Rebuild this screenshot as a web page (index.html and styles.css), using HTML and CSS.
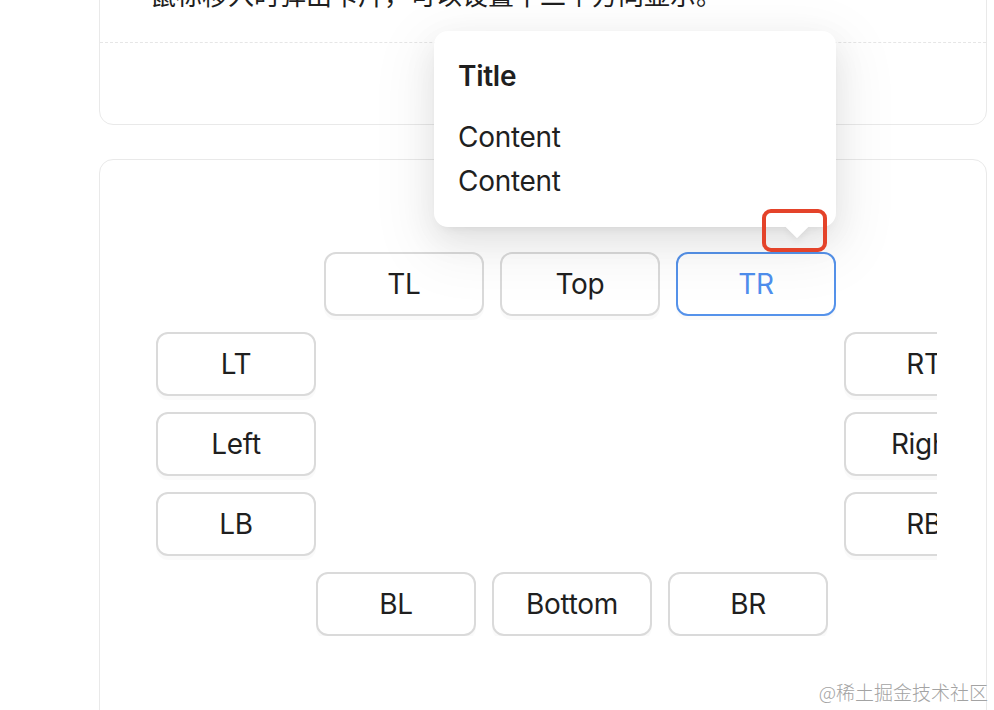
FILE: index.html
```html
<!DOCTYPE html>
<html lang="zh-CN">
<head>
<meta charset="utf-8">
<title>Popover placement</title>
<link rel="stylesheet" href="styles.css">
</head>
<body>
<div class="page">
  <section class="card card-intro">
    <p class="desc">鼠标移入时弹出卡片，可以设置十二个方向显示。</p>
    <div class="card-foot"></div>
  </section>

  <section class="card card-demo">
    <div class="demo">
      <div class="row row-top">
        <button class="btn">TL</button>
        <button class="btn">Top</button>
        <button class="btn btn-active">TR</button>
      </div>
      <div class="sides">
        <div class="col">
          <button class="btn">LT</button>
          <button class="btn">Left</button>
          <button class="btn">LB</button>
        </div>
        <div class="col col-right">
          <button class="btn">RT</button>
          <button class="btn">Right</button>
          <button class="btn">RB</button>
        </div>
      </div>
      <div class="row row-bottom">
        <button class="btn">BL</button>
        <button class="btn">Bottom</button>
        <button class="btn">BR</button>
      </div>
    </div>
  </section>

  <div class="popover">
    <span class="popover-arrow"></span>
    <div class="popover-title">Title</div>
    <div class="popover-body">
      <p>Content</p>
      <p>Content</p>
    </div>
  </div>

  <div class="mark"></div>
  <div class="watermark">@稀土掘金技术社区</div>
</div>
</body>
</html>
```

FILE: styles.css
```css
* { box-sizing: border-box; }

html, body {
  margin: 0;
  padding: 0;
  background: #ffffff;
  overflow: hidden;
}

body {
  font-family: Inter, "Noto Sans", "Noto Sans CJK SC", sans-serif;
  color: #1f1f1f;
}

.page {
  position: relative;
  display: flow-root;
  height: 710px;
  padding: 0 7px 0 99px;
}

.card {
  border: 1px solid #e9e9e9;
  border-radius: 14px;
  background: #fff;
}

.card-intro {
  margin-top: -27px;
}

.desc {
  margin: 0;
  padding: 0 48px 28px 50px;
  font-family: "Noto Sans CJK SC", sans-serif;
  font-size: 26px;
  line-height: 40px;
  color: #1f1f1f;
  border-bottom: 1px dashed #e6e6e6;
  white-space: nowrap;
  overflow: hidden;
}

.card-foot {
  height: 81px;
}

.card-demo {
  margin-top: 34px;
  padding: 92px 0 120px 56px;
}

.demo {
  width: 781px;
  overflow: hidden;
}

.row {
  display: flex;
  gap: 16px;
}

.row-top { margin-left: 168px; }
.row-bottom { margin-left: 160px; margin-top: 16px; }

.sides {
  display: flex;
  margin-top: 16px;
}

.col {
  display: flex;
  flex-direction: column;
  gap: 16px;
  flex: none;
}

.col-right { margin-left: 528px; }

.btn {
  flex: none;
  width: 160px;
  height: 64px;
  padding: 0;
  border: 2px solid #dadada;
  border-radius: 12px;
  background: #fff;
  box-shadow: 0 4px 0 rgba(0, 0, 0, 0.02);
  font-family: Inter, "Noto Sans", sans-serif;
  font-size: 28px;
  letter-spacing: -0.3px;
  color: #1f1f1f;
  text-align: center;
}

.btn-active {
  border-color: #5592ea;
  color: #4f8fee;
}

.popover {
  position: absolute;
  left: 434px;
  top: 31px;
  width: 402px;
  height: 196px;
  padding: 23px 24px 24px;
  background: #fff;
  border-radius: 14px;
  box-shadow: 0 12px 32px rgba(0, 0, 0, 0.08),
              0 6px 12px -8px rgba(0, 0, 0, 0.12),
              0 18px 56px 16px rgba(0, 0, 0, 0.05);
  letter-spacing: -0.3px;
}

.popover-arrow {
  position: absolute;
  right: 31px;
  bottom: -8px;
  width: 16px;
  height: 16px;
  background: #fff;
  transform: rotate(45deg);
  box-shadow: 3px 3px 6px rgba(0, 0, 0, 0.05);
}

.popover-title {
  position: relative;
  font-size: 28px;
  font-weight: 600;
  line-height: 44px;
  margin-bottom: 17px;
}

.popover-body {
  position: relative;
  font-size: 28px;
  line-height: 44px;
}

.popover-body p { margin: 0; }

.mark {
  position: absolute;
  left: 762px;
  top: 209px;
  width: 65px;
  height: 43px;
  border: 4px solid #e4432a;
  border-radius: 9px;
}

.watermark {
  position: absolute;
  right: 6px;
  bottom: 7px;
  font-family: "Noto Sans CJK SC", sans-serif;
  font-size: 19px;
  line-height: 22px;
  color: #a3a3a3;
  font-weight: 300;
}
```
